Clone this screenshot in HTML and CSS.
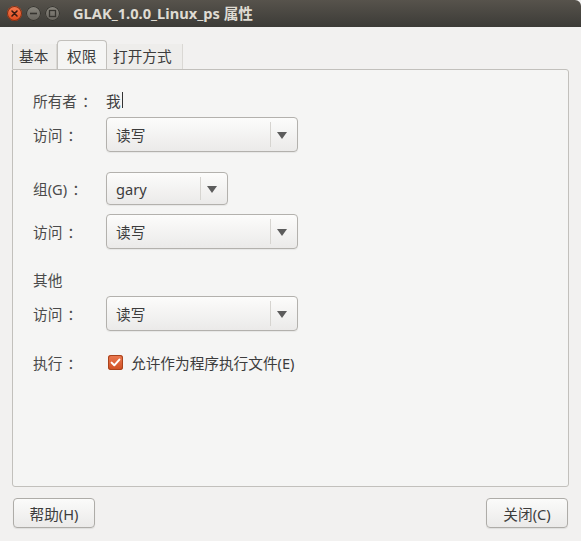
FILE: index.html
```html
<!DOCTYPE html>
<html lang="zh">
<head>
<meta charset="utf-8">
<title>属性</title>
<link rel="stylesheet" href="styles.css">
</head>
<body>
<div class="window">
  <header class="titlebar">
    <div class="wbtns">
      <span class="wbtn close"><svg width="15" height="15" viewBox="0 0 15 15"><path d="M5 5 L10 10 M10 5 L5 10" stroke="#3a1a10" stroke-width="1.6" stroke-linecap="round"/></svg></span>
      <span class="wbtn"><svg width="15" height="15" viewBox="0 0 15 15"><path d="M4 7.5 H11" stroke="#36342f" stroke-width="1.6"/></svg></span>
      <span class="wbtn"><svg width="15" height="15" viewBox="0 0 15 15"><rect x="4.5" y="4.5" width="6" height="6" fill="none" stroke="#36342f" stroke-width="1.3"/></svg></span>
    </div>
    <div class="title">GLAK_1.0.0_Linux_ps 属性</div>
  </header>
  <main class="main">
    <nav class="tabs">
      <div class="tab first">基本</div>
      <div class="tab active">权限</div>
      <div class="tab">打开方式</div>
    </nav>
    <section class="panel">
      <div class="row r-owner"><span class="label">所有者<span class="colon">：</span></span><span class="value">我<span class="cursor"></span></span></div>
      <div class="row r-c1"><span class="label">访问<span class="colon">：</span></span><div class="combo wide"><span class="ctext">读写</span><span class="sep"></span><span class="arrow"></span></div></div>
      <div class="row r-group"><span class="label">组(G)<span class="colon">：</span></span><div class="combo narrow"><span class="ctext">gary</span><span class="sep"></span><span class="arrow"></span></div></div>
      <div class="row r-c3"><span class="label">访问<span class="colon">：</span></span><div class="combo wide"><span class="ctext">读写</span><span class="sep"></span><span class="arrow"></span></div></div>
      <div class="row r-other"><span class="label">其他</span></div>
      <div class="row r-c4"><span class="label">访问<span class="colon">：</span></span><div class="combo wide"><span class="ctext">读写</span><span class="sep"></span><span class="arrow"></span></div></div>
      <div class="row r-exec"><span class="label">执行<span class="colon">：</span></span><span class="check"><svg width="15" height="15" viewBox="0 0 15 15"><path d="M3.6 7.6 L6.3 10.3 L11.4 4.6" fill="none" stroke="#fff" stroke-width="2" stroke-linecap="round" stroke-linejoin="round"/></svg></span><span class="clabel">允许作为程序执行文件(E)</span></div>
    </section>
    <footer class="buttons">
      <button class="btn">帮助(H)</button>
      <button class="btn">关闭(C)</button>
    </footer>
  </main>
</div>
</body>
</html>
```
FILE: styles.css
```css
html, body {
  margin: 0;
  padding: 0;
}
body {
  width: 581px;
  height: 541px;
  background: #f2f1f0;
  font-family: "Noto Sans", "Noto Sans CJK SC", sans-serif;
  font-size: 14.67px;
  color: #3c3c3c;
  overflow: hidden;
}
.window {
  width: 581px;
  height: 541px;
  display: flex;
  flex-direction: column;
}
.titlebar {
  height: 27px;
  flex: none;
  background: linear-gradient(#57534c, #3c3b37);
  border-top-right-radius: 6px;
  display: flex;
  align-items: center;
  box-sizing: border-box;
}
.wbtns {
  display: flex;
  gap: 4px;
  padding-left: 7px;
  width: 66px;
  flex: none;
}
.wbtn {
  width: 15px;
  height: 15px;
  border-radius: 50%;
  background: linear-gradient(#8a877f, #66635c);
  box-shadow: 0 0 0 1px #36342f inset;
  display: block;
}
.wbtn svg { display: block; }
.wbtn.close {
  background: linear-gradient(#f57b52, #df4a1b);
  box-shadow: 0 0 0 1px #7c3016 inset;
}
.title {
  color: #dfdbd2;
  font-weight: bold;
  font-size: 14.67px;
  line-height: 27px;
}
.main {
  flex: 1;
  display: flex;
  flex-direction: column;
  padding: 0 12px 0 12px;
}
.tabs {
  margin-top: 13px;
  height: 29px;
  display: flex;
  align-items: flex-end;
}
.tab {
  height: 25px;
  line-height: 25px;
  padding: 0 7px;
  background: #eeedeb;
  border-right: 1px solid #dad8d4;
  box-sizing: border-box;
  color: #3c3c3c;
  white-space: nowrap;
}
.tab.first {
  border-left: 1px solid #c2c0bc;
  width: 45px;
  padding-left: 6px;
}
.tab.active {
  height: 29px;
  line-height: 31px;
  width: 50px;
  padding-left: 9px;
  background: #f5f5f4;
  border: 1px solid #c2c0bc;
  border-bottom: none;
  border-radius: 4px 4px 0 0;
}
.tab:last-child {
  width: 76px;
  padding-left: 6px;
}
.panel {
  height: 418px;
  box-sizing: border-box;
  background: #f5f5f4;
  border: 1px solid #c2c0bc;
  border-radius: 0 3px 3px 3px;
  padding-left: 20px;
  display: flex;
  flex-direction: column;
}
.row {
  display: flex;
  align-items: center;
}
.label {
  width: 73px;
  flex: none;
  color: #4a4a4a;
  white-space: nowrap;
}
.colon {
  margin-left: 5px;
}
.r-owner { margin-top: 20px; height: 20px; }
.r-c1 { margin-top: 7px; }
.r-group { margin-top: 20px; }
.r-c3 { margin-top: 9px; }
.r-other { margin-top: 20px; height: 20px; }
.r-c4 { margin-top: 7px; }
.r-exec { margin-top: 21px; height: 20px; }
.value {
  display: flex;
  align-items: center;
}
.cursor {
  display: inline-block;
  width: 1px;
  height: 16px;
  background: #333;
  margin-left: 1px;
}
.combo {
  box-sizing: border-box;
  height: 35px;
  border: 1px solid #b3b1ad;
  border-radius: 4px;
  background: linear-gradient(#fcfcfb, #ebeae9);
  box-shadow: 0 1px 1px rgba(0,0,0,0.06);
  display: flex;
  align-items: center;
  padding-left: 9px;
}
.combo.wide { width: 192px; }
.combo.narrow { width: 122px; height: 33px; }
.ctext {
  flex: 1;
  color: #3c3c3c;
}
.sep {
  width: 1px;
  align-self: stretch;
  margin: 4px 0;
  background: #d6d4d0;
}
.arrow {
  width: 0;
  height: 0;
  border-left: 5px solid transparent;
  border-right: 5px solid transparent;
  border-top: 7px solid #5c5c5c;
  margin: 1px 10px 0 6px;
}
.check {
  width: 15px;
  height: 15px;
  box-sizing: border-box;
  border-radius: 3px;
  background: linear-gradient(#ec7a52, #cf4f22);
  box-shadow: 0 0 0 1px #a9431c inset;
  margin-left: 2px;
  margin-right: 8px;
  flex: none;
}
.check svg { display: block; }
.clabel { color: #3c3c3c; }
.buttons {
  display: flex;
  justify-content: space-between;
  margin-top: 11px;
  padding: 0 1px;
}
.btn {
  width: 82px;
  height: 30px;
  box-sizing: border-box;
  border: 1px solid #aeaca8;
  border-radius: 4px;
  background: linear-gradient(#fbfbfa, #ebeae9);
  box-shadow: 0 1px 1px rgba(0,0,0,0.08);
  font-family: "Noto Sans", "Noto Sans CJK SC", sans-serif;
  font-size: 14.67px;
  color: #3c3c3c;
  padding: 0;
}
```
